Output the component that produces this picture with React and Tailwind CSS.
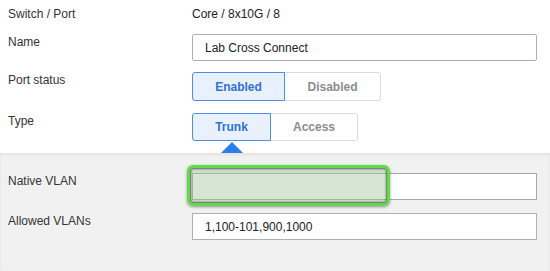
import { useState } from "react";

const font = { fontFamily: '"Liberation Sans", Arial, sans-serif' };

function Row({ label, children, className = "" }) {
  return (
    <div className={`flex items-start ${className}`}>
      <div className="w-[184px] shrink-0 text-[12px] leading-4 text-[#333]">{label}</div>
      <div className="flex-1">{children}</div>
    </div>
  );
}

function Segment({ options, value, onChange }) {
  return (
    <div className="flex">
      {options.map((o, i) => {
        const active = o.id === value;
        return (
          <button
            key={o.id}
            onClick={() => onChange(o.id)}
            className={`${o.w} ${o.h} text-[12px] font-bold border ${
              active
                ? "bg-[#e8f1fd] border-[#4a8fe8] text-[#2f73d6] z-10"
                : "bg-white border-[#dcdcdc] text-[#8c8c8c]"
            } ${i === 0 ? "rounded-l-[3px]" : "-ml-px rounded-r-[3px]"}`}
          >
            {o.label}
          </button>
        );
      })}
    </div>
  );
}

export default function App() {
  const [status, setStatus] = useState("enabled");
  const [type, setType] = useState("trunk");

  return (
    <div className="min-h-[271px] flex flex-col bg-white" style={font}>
      {/* top section */}
      <div className="pl-2 pr-[13px] pt-[6px]">
        <Row label="Switch / Port">
          <div className="text-[12px] leading-4 text-[#222]">Core / 8x10G / 8</div>
        </Row>

        <Row label="Name" className="mt-3">
          <input
            defaultValue="Lab Cross Connect"
            className="w-full h-[27px] border border-[#b0b0b0] rounded-[2px] pl-3 text-[12px] text-[#222] outline-none"
            style={font}
          />
        </Row>

        <Row label="Port status" className="mt-[11px]">
          <Segment
            value={status}
            onChange={setStatus}
            options={[
              { id: "enabled", label: "Enabled", w: "w-[93px]", h: "h-[29px]" },
              { id: "disabled", label: "Disabled", w: "w-[97px]", h: "h-[29px]" },
            ]}
          />
        </Row>

        <Row label="Type" className="mt-3">
          <div className="flex flex-col">
            <Segment
              value={type}
              onChange={setType}
              options={[
                { id: "trunk", label: "Trunk", w: "w-[79px]", h: "h-[28px]" },
                { id: "access", label: "Access", w: "w-[88px]", h: "h-[28px]" },
              ]}
            />
            <div className="ml-[29px] mt-px w-0 h-0 border-l-[11px] border-r-[11px] border-b-[11px] border-l-transparent border-r-transparent border-b-[#2b7de9]" />
          </div>
        </Row>
      </div>

      {/* gray section */}
      <div className="flex-1 bg-[#f1f1f1] shadow-[inset_0_2px_3px_rgba(0,0,0,0.06)] pl-2 pr-[13px] pt-5 pb-4">
        <Row label="Native VLAN">
          <div className="relative">
            <input
              className="w-full h-[27px] border border-[#a8a8a8] bg-white pl-3 text-[12px] outline-none"
              style={font}
            />
            <div className="absolute left-[-5px] top-[-8px] w-[203px] h-[41px] rounded-[6px] border-[3px] border-[#5ddc48] bg-[rgba(165,200,155,0.45)] shadow-[inset_0_0_2px_1px_rgba(0,0,0,0.55),0_1px_3px_rgba(0,0,0,0.4)] pointer-events-none" />
          </div>
        </Row>

        <Row label="Allowed VLANs" className="mt-[13px]">
          <input
            defaultValue="1,100-101,900,1000"
            className="w-full h-[27px] border border-[#b0b0b0] bg-white pl-3 text-[12px] text-[#222] outline-none"
            style={font}
          />
        </Row>
      </div>
    </div>
  );
}
